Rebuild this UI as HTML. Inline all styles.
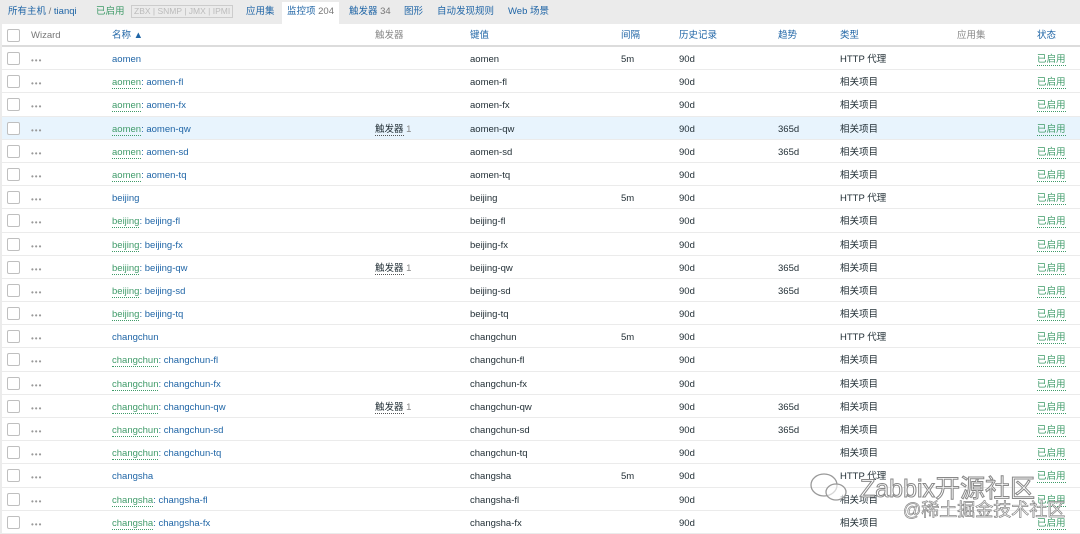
<!DOCTYPE html><html><head><meta charset="utf-8"><style>
body{margin:0;width:1080px;height:534px;overflow:hidden;background:#ebebeb;font-family:"Liberation Sans","Noto Sans CJK SC",sans-serif;font-size:9.5px;line-height:11px;color:#1f2c33}
.top{height:24px;position:relative;color:#1f65a6}
.top span{position:absolute;top:6px;line-height:11px}
.tbl{position:absolute;left:2px;top:24px;width:1078px;background:#fff}
.r{position:relative;height:23.2px;border-bottom:1px solid #ebebeb;box-sizing:border-box}
.r span{position:absolute;top:7px;white-space:nowrap;line-height:11px}
.h{height:23px;border-bottom:2px solid #dcdcdc;color:#1f65a6}
.h span{top:6px}
.cb{position:absolute;left:5px;top:5px;width:11px;height:11px;border:1px solid #bfbfbf;border-radius:2px;background:#fff}
.d{left:29px;color:#999;letter-spacing:1px;font-size:8px;top:8px!important}
.n{left:110px;color:#1f65a6}.g{color:#3f9b69;border-bottom:1px dotted #3f9b69}
.t{left:373px}.t u{text-decoration:none;border-bottom:1px dotted #555}.t i{font-style:normal;color:#888}
.k{left:468px}.iv{left:619px}.hi{left:677px}.tr{left:776px}.ty{left:838px}.st{left:1035px;color:#3f9b69;border-bottom:1px dotted #3f9b69}
.hl{background:#e8f4fd}
.wm{position:absolute;white-space:nowrap;color:rgba(255,255,255,.75);-webkit-text-stroke:1px #888;font-size:25px;line-height:30px;left:860px;top:474px;letter-spacing:0}
.wm2{position:absolute;white-space:nowrap;color:rgba(255,255,255,.75);-webkit-text-stroke:.7px #888;font-size:18px;line-height:22px;left:903px;top:499px}
</style></head><body>
<div class="top">
<span style="left:8px">所有主机 <span style="position:static;color:#777">/</span> tianqi</span>
<span style="left:96px;color:#3f9b69">已启用</span>
<span style="left:131px;top:5px;border:1px solid #ccc;color:#bbb;padding:0 2px;font-size:8.5px">ZBX | SNMP | JMX | IPMI</span>
<span style="left:246px">应用集</span>
<span style="left:282px;top:2px;background:#fff;padding:4px 5px 7px">监控项 <span style="position:static;color:#777">204</span></span>
<span style="left:349px">触发器 <span style="position:static;color:#777">34</span></span>
<span style="left:404px">图形</span>
<span style="left:437px">自动发现规则</span>
<span style="left:508px">Web 场景</span>
</div>
<div class="tbl">
<div class="r h"><div class="cb"></div><span style="left:29px;color:#777">Wizard</span><span class="n">名称 ▲</span><span class="t" style="color:#888">触发器</span><span class="k" style="color:#1f65a6">键值</span><span class="iv">间隔</span><span class="hi">历史记录</span><span class="tr">趋势</span><span class="ty" style="color:#1f65a6">类型</span><span style="left:955px;color:#888">应用集</span><span style="left:1035px">状态</span></div>
<div class="r"><div class="cb"></div><span class="d">•••</span><span class="n">aomen</span><span class="k">aomen</span><span class="iv">5m</span><span class="hi">90d</span><span class="ty">HTTP 代理</span><span class="st">已启用</span></div>
<div class="r"><div class="cb"></div><span class="d">•••</span><span class="n"><span class="g" style="position:static">aomen</span>: aomen-fl</span><span class="k">aomen-fl</span><span class="hi">90d</span><span class="ty">相关项目</span><span class="st">已启用</span></div>
<div class="r"><div class="cb"></div><span class="d">•••</span><span class="n"><span class="g" style="position:static">aomen</span>: aomen-fx</span><span class="k">aomen-fx</span><span class="hi">90d</span><span class="ty">相关项目</span><span class="st">已启用</span></div>
<div class="r hl"><div class="cb"></div><span class="d">•••</span><span class="n"><span class="g" style="position:static">aomen</span>: aomen-qw</span><span class="t"><u>触发器</u> <i>1</i></span><span class="k">aomen-qw</span><span class="hi">90d</span><span class="tr">365d</span><span class="ty">相关项目</span><span class="st">已启用</span></div>
<div class="r"><div class="cb"></div><span class="d">•••</span><span class="n"><span class="g" style="position:static">aomen</span>: aomen-sd</span><span class="k">aomen-sd</span><span class="hi">90d</span><span class="tr">365d</span><span class="ty">相关项目</span><span class="st">已启用</span></div>
<div class="r"><div class="cb"></div><span class="d">•••</span><span class="n"><span class="g" style="position:static">aomen</span>: aomen-tq</span><span class="k">aomen-tq</span><span class="hi">90d</span><span class="ty">相关项目</span><span class="st">已启用</span></div>
<div class="r"><div class="cb"></div><span class="d">•••</span><span class="n">beijing</span><span class="k">beijing</span><span class="iv">5m</span><span class="hi">90d</span><span class="ty">HTTP 代理</span><span class="st">已启用</span></div>
<div class="r"><div class="cb"></div><span class="d">•••</span><span class="n"><span class="g" style="position:static">beijing</span>: beijing-fl</span><span class="k">beijing-fl</span><span class="hi">90d</span><span class="ty">相关项目</span><span class="st">已启用</span></div>
<div class="r"><div class="cb"></div><span class="d">•••</span><span class="n"><span class="g" style="position:static">beijing</span>: beijing-fx</span><span class="k">beijing-fx</span><span class="hi">90d</span><span class="ty">相关项目</span><span class="st">已启用</span></div>
<div class="r"><div class="cb"></div><span class="d">•••</span><span class="n"><span class="g" style="position:static">beijing</span>: beijing-qw</span><span class="t"><u>触发器</u> <i>1</i></span><span class="k">beijing-qw</span><span class="hi">90d</span><span class="tr">365d</span><span class="ty">相关项目</span><span class="st">已启用</span></div>
<div class="r"><div class="cb"></div><span class="d">•••</span><span class="n"><span class="g" style="position:static">beijing</span>: beijing-sd</span><span class="k">beijing-sd</span><span class="hi">90d</span><span class="tr">365d</span><span class="ty">相关项目</span><span class="st">已启用</span></div>
<div class="r"><div class="cb"></div><span class="d">•••</span><span class="n"><span class="g" style="position:static">beijing</span>: beijing-tq</span><span class="k">beijing-tq</span><span class="hi">90d</span><span class="ty">相关项目</span><span class="st">已启用</span></div>
<div class="r"><div class="cb"></div><span class="d">•••</span><span class="n">changchun</span><span class="k">changchun</span><span class="iv">5m</span><span class="hi">90d</span><span class="ty">HTTP 代理</span><span class="st">已启用</span></div>
<div class="r"><div class="cb"></div><span class="d">•••</span><span class="n"><span class="g" style="position:static">changchun</span>: changchun-fl</span><span class="k">changchun-fl</span><span class="hi">90d</span><span class="ty">相关项目</span><span class="st">已启用</span></div>
<div class="r"><div class="cb"></div><span class="d">•••</span><span class="n"><span class="g" style="position:static">changchun</span>: changchun-fx</span><span class="k">changchun-fx</span><span class="hi">90d</span><span class="ty">相关项目</span><span class="st">已启用</span></div>
<div class="r"><div class="cb"></div><span class="d">•••</span><span class="n"><span class="g" style="position:static">changchun</span>: changchun-qw</span><span class="t"><u>触发器</u> <i>1</i></span><span class="k">changchun-qw</span><span class="hi">90d</span><span class="tr">365d</span><span class="ty">相关项目</span><span class="st">已启用</span></div>
<div class="r"><div class="cb"></div><span class="d">•••</span><span class="n"><span class="g" style="position:static">changchun</span>: changchun-sd</span><span class="k">changchun-sd</span><span class="hi">90d</span><span class="tr">365d</span><span class="ty">相关项目</span><span class="st">已启用</span></div>
<div class="r"><div class="cb"></div><span class="d">•••</span><span class="n"><span class="g" style="position:static">changchun</span>: changchun-tq</span><span class="k">changchun-tq</span><span class="hi">90d</span><span class="ty">相关项目</span><span class="st">已启用</span></div>
<div class="r"><div class="cb"></div><span class="d">•••</span><span class="n">changsha</span><span class="k">changsha</span><span class="iv">5m</span><span class="hi">90d</span><span class="ty">HTTP 代理</span><span class="st">已启用</span></div>
<div class="r"><div class="cb"></div><span class="d">•••</span><span class="n"><span class="g" style="position:static">changsha</span>: changsha-fl</span><span class="k">changsha-fl</span><span class="hi">90d</span><span class="ty">相关项目</span><span class="st">已启用</span></div>
<div class="r"><div class="cb"></div><span class="d">•••</span><span class="n"><span class="g" style="position:static">changsha</span>: changsha-fx</span><span class="k">changsha-fx</span><span class="hi">90d</span><span class="ty">相关项目</span><span class="st">已启用</span></div>
</div>
<svg style="position:absolute;left:808px;top:470px" width="40" height="34"><ellipse cx="16" cy="15" rx="13" ry="11" fill="none" stroke="#999" stroke-width="1.3"/><ellipse cx="28" cy="22" rx="10" ry="8" fill="rgba(255,255,255,.6)" stroke="#999" stroke-width="1.3"/></svg>
<div class="wm">Zabbix开源社区</div>
<div class="wm2">@稀土掘金技术社区</div>
</body></html>
